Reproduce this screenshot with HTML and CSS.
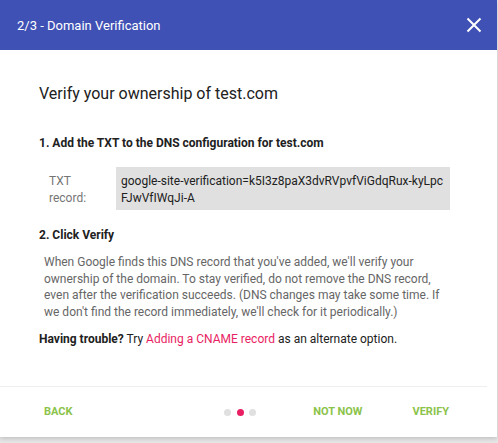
FILE: index.html
```html
<!DOCTYPE html>
<html>
<head>
<meta charset="utf-8">
<link rel="stylesheet" href="styles.css">
</head>
<body>
<div class="dialog">
  <div class="header">
    <span class="header-title">2/3 - Domain Verification</span>
    <svg class="close" width="16" height="16" viewBox="0 0 16 16"><path d="M1.5 1.5 L14.5 14.5 M14.5 1.5 L1.5 14.5" stroke="#fff" stroke-width="2" fill="none"/></svg>
  </div>
  <div class="content">
    <h1 class="title">Verify your ownership of test.com</h1>
    <h2 class="step">1. Add the TXT to the DNS configuration for test.com</h2>
    <div class="record-row">
      <div class="record-label">TXT<br>record:</div>
      <div class="record-value">google-site-verification=k5I3z8paX3dvRVpvfViGdqRux-kyLpcFJwVfIWqJi-A</div>
    </div>
    <h2 class="step step2">2. Click Verify</h2>
    <p class="desc">When Google finds this DNS record that you've added, we'll verify your ownership of the domain. To stay verified, do not remove the DNS record, even after the verification succeeds. (DNS changes may take some time. If we don't find the record immediately, we'll check for it periodically.)</p>
    <p class="trouble"><b>Having trouble?</b> Try <a class="link">Adding a CNAME record</a> as an alternate option.</p>
  </div>
  <div class="footer">
    <span class="btn back">BACK</span>
    <span class="spacer"></span>
    <span class="dots"><i class="dot"></i><i class="dot active"></i><i class="dot"></i></span>
    <span class="btn notnow">NOT NOW</span>
    <span class="btn verify">VERIFY</span>
  </div>
</div>
</body>
</html>
```
FILE: styles.css
```css
html, body {
  margin: 0;
  padding: 0;
}
body {
  background: #e6e6e6;
  font-family: Roboto, "Liberation Sans", Arial, sans-serif;
  width: 498px;
  height: 443px;
  overflow: hidden;
}
.dialog {
  width: 497px;
  height: 437px;
  background: #fff;
  display: flex;
  flex-direction: column;
  box-shadow: 0 2px 4px rgba(0,0,0,0.15);
}
.header {
  height: 50px;
  flex: none;
  background: #3f51b5;
  display: flex;
  align-items: center;
  padding: 0 15px 0 17px;
}
.header-title {
  color: #fff;
  font-size: 13px;
  flex: 1;
  padding-top: 1px;
}
.close {
  display: block;
}
.content {
  flex: 1;
  padding: 34px 29px 0 39px;
  border-bottom: 1px solid #eeeeee;
  margin-right: 10px;
}
.title {
  margin: 0;
  font-size: 16px;
  font-weight: 400;
  line-height: 20px;
  color: #212121;
}
.step {
  margin: 31px 0 0 0;
  font-size: 12px;
  font-weight: 700;
  line-height: 16px;
  color: #212121;
}
.record-row {
  display: flex;
  margin-top: 16px;
  padding-left: 10px;
}
.record-label {
  width: 67px;
  flex: none;
  font-size: 12px;
  line-height: 16.5px;
  color: #757575;
  padding-top: 6px;
}
.record-value {
  width: 334px;
  box-sizing: border-box;
  background: #e0e0e0;
  padding: 6px 5px 5px 5px;
  height: 43px;
  font-size: 12px;
  line-height: 16.5px;
  color: #212121;
  word-break: break-all;
}
.step2 {
  margin-top: 17px;
}
.desc {
  margin: 11px 0 0 0;
  padding: 0 10px 0 5px;
  font-size: 12px;
  line-height: 16.6px;
  color: #666666;
}
.trouble {
  margin: 11px 0 0 0;
  font-size: 12px;
  line-height: 16px;
  color: #212121;
}
.trouble b {
  font-weight: 700;
}
.link {
  color: #e91e63;
}
.footer {
  height: 50px;
  flex: none;
  display: flex;
  align-items: center;
  padding: 0 48px 0 44px;
}
.btn {
  font-size: 11px;
  font-weight: 700;
  color: #8bc34a;
  line-height: 14px;
}
.spacer {
  flex: 1;
}
.dots {
  display: flex;
  gap: 5.5px;
}
.dot {
  width: 7px;
  height: 7px;
  border-radius: 50%;
  background: #e0e0e0;
  display: block;
}
.dot.active {
  background: #e91e63;
}
.notnow {
  margin-left: 57px;
}
.verify {
  margin-left: 50px;
}
```
